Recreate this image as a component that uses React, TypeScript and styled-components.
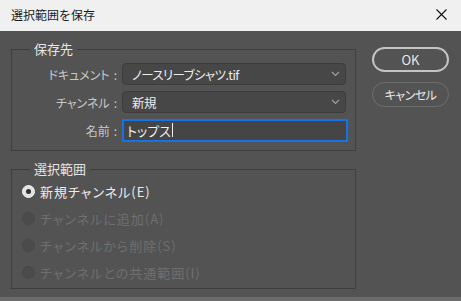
import React from 'react';
import styled, { createGlobalStyle } from 'styled-components';

const GlobalStyle = createGlobalStyle`
  html, body {
    margin: 0;
    padding: 0;
    background: #6a6a6a;
  }
  body {
    font-family: "Noto Sans CJK JP", "Noto Sans", sans-serif;
  }
`;

const Window = styled.div`
  width: 461px;
  display: flex;
  flex-direction: column;
`;

const TitleBar = styled.div`
  height: 31px;
  background: #f0f0f0;
  display: flex;
  align-items: center;
  justify-content: space-between;
  padding: 0 10px 2px 11px;
  box-sizing: border-box;
  font-size: 12px;
  color: #1a1a1a;
`;

const CloseButton = styled.div`
  width: 20px;
  height: 20px;
  display: flex;
  align-items: center;
  justify-content: center;
`;

const Body = styled.div`
  height: 266px;
  background: #535353;
  display: flex;
  gap: 16px;
  padding-left: 11px;
  box-sizing: border-box;
  font-feature-settings: "palt";
`;

const LeftColumn = styled.div`
  width: 345px;
  display: flex;
  flex-direction: column;
  gap: 18px;
  padding-top: 18px;
`;

const Group = styled.div<{ $h: number }>`
  position: relative;
  border: 1px solid #3e3e3e;
  box-sizing: border-box;
  height: ${(p) => p.$h}px;
`;

const Legend = styled.div`
  position: absolute;
  top: -11px;
  left: 18px;
  padding: 0 4px;
  background: #535353;
  color: #e4e4e4;
  font-size: 13px;
  line-height: 20px;
  font-feature-settings: normal;
`;

const FieldList = styled.div`
  display: flex;
  flex-direction: column;
  gap: 6px;
  padding: 13px 9px 0 0;
`;

const FieldRow = styled.div`
  display: flex;
  align-items: center;
  gap: 5px;
  height: 22px;
`;

const Label = styled.div`
  width: 105px;
  text-align: right;
  color: #c8c8c8;
  font-size: 12px;
  white-space: nowrap;
`;

const Colon = styled.span`
  margin-left: 4px;
`;

const Select = styled.div`
  flex: 1;
  height: 22px;
  box-sizing: border-box;
  background: #474747;
  border: 1px solid #3c3c3c;
  border-radius: 4px;
  display: flex;
  align-items: center;
  justify-content: space-between;
  padding: 0 5px 0 9px;
  color: #ececec;
  font-size: 12.5px;
  letter-spacing: -0.6px;
`;

const TextInput = styled.div`
  flex: 1;
  margin-right: -2px;
  height: 23px;
  box-sizing: border-box;
  background: #454545;
  border: 2px solid #1473e6;
  display: flex;
  align-items: center;
  padding-left: 3px;
  color: #f0f0f0;
  font-size: 13px;
`;

const Caret = styled.span`
  display: inline-block;
  width: 1px;
  height: 14px;
  background: #f0f0f0;
  margin-left: 1px;
`;

const RadioList = styled.div`
  display: flex;
  flex-direction: column;
  gap: 7px;
  padding: 11px 0 0 10px;
`;

const RadioRow = styled.div<{ $on?: boolean }>`
  display: flex;
  align-items: center;
  gap: 5px;
  height: 20px;
  font-size: 13px;
  letter-spacing: 1px;
  color: ${(p) => (p.$on ? '#ececec' : '#6f6f6f')};
`;

const RadioDot = styled.span<{ $on?: boolean }>`
  width: 13px;
  height: 13px;
  border-radius: 50%;
  box-sizing: border-box;
  background: ${(p) => (p.$on ? '#e2e2e2' : '#4b4b4b')};
  border: 1px solid ${(p) => (p.$on ? '#f2f2f2' : '#484848')};
  display: flex;
  align-items: center;
  justify-content: center;

  &::after {
    content: '';
    width: 5px;
    height: 5px;
    border-radius: 50%;
    background: #303030;
    display: ${(p) => (p.$on ? 'block' : 'none')};
  }
`;

const ButtonColumn = styled.div`
  display: flex;
  flex-direction: column;
  gap: 10px;
  padding-top: 16px;
`;

const Button = styled.div<{ $primary?: boolean }>`
  width: 77px;
  height: 25px;
  box-sizing: border-box;
  border-radius: 13px;
  border: ${(p) => (p.$primary ? '2px solid #c4c4c4' : '1.5px solid #6e6e6e')};
  display: flex;
  align-items: center;
  justify-content: center;
  color: #e8e8e8;
  font-size: ${(p) => (p.$primary ? '13px' : '12px')};
  letter-spacing: ${(p) => (p.$primary ? '0' : '-0.5px')};
`;

const Chevron = () => (
  <svg width="9" height="6" viewBox="0 0 9 6">
    <polyline points="1,1 4.5,4.5 8,1" fill="none" stroke="#a0a0a0" strokeWidth="1.2" />
  </svg>
);

const radios = [
  { label: '新規チャンネル(E)', on: true },
  { label: 'チャンネルに追加(A)' },
  { label: 'チャンネルから削除(S)' },
  { label: 'チャンネルとの共通範囲(I)' },
];

export default function App() {
  return (
    <>
      <GlobalStyle />
      <Window>
        <TitleBar>
          <span>選択範囲を保存</span>
          <CloseButton>
            <svg width="11" height="11" viewBox="0 0 11 11">
              <path d="M0.5 0.5 L10.5 10.5 M10.5 0.5 L0.5 10.5" stroke="#111" strokeWidth="1.1" />
            </svg>
          </CloseButton>
        </TitleBar>
        <Body>
          <LeftColumn>
            <Group $h={102}>
              <Legend>保存先</Legend>
              <FieldList>
                <FieldRow>
                  <Label>
                    ドキュメント<Colon>:</Colon>
                  </Label>
                  <Select>
                    <span>ノースリーブシャツ.tif</span>
                    <Chevron />
                  </Select>
                </FieldRow>
                <FieldRow>
                  <Label>
                    チャンネル<Colon>:</Colon>
                  </Label>
                  <Select>
                    <span>新規</span>
                    <Chevron />
                  </Select>
                </FieldRow>
                <FieldRow>
                  <Label>
                    名前<Colon>:</Colon>
                  </Label>
                  <TextInput>
                    トップス<Caret />
                  </TextInput>
                </FieldRow>
              </FieldList>
            </Group>
            <Group $h={120}>
              <Legend>選択範囲</Legend>
              <RadioList>
                {radios.map((r) => (
                  <RadioRow key={r.label} $on={r.on}>
                    <RadioDot $on={r.on} />
                    {r.label}
                  </RadioRow>
                ))}
              </RadioList>
            </Group>
          </LeftColumn>
          <ButtonColumn>
            <Button $primary>OK</Button>
            <Button>キャンセル</Button>
          </ButtonColumn>
        </Body>
      </Window>
    </>
  );
}
